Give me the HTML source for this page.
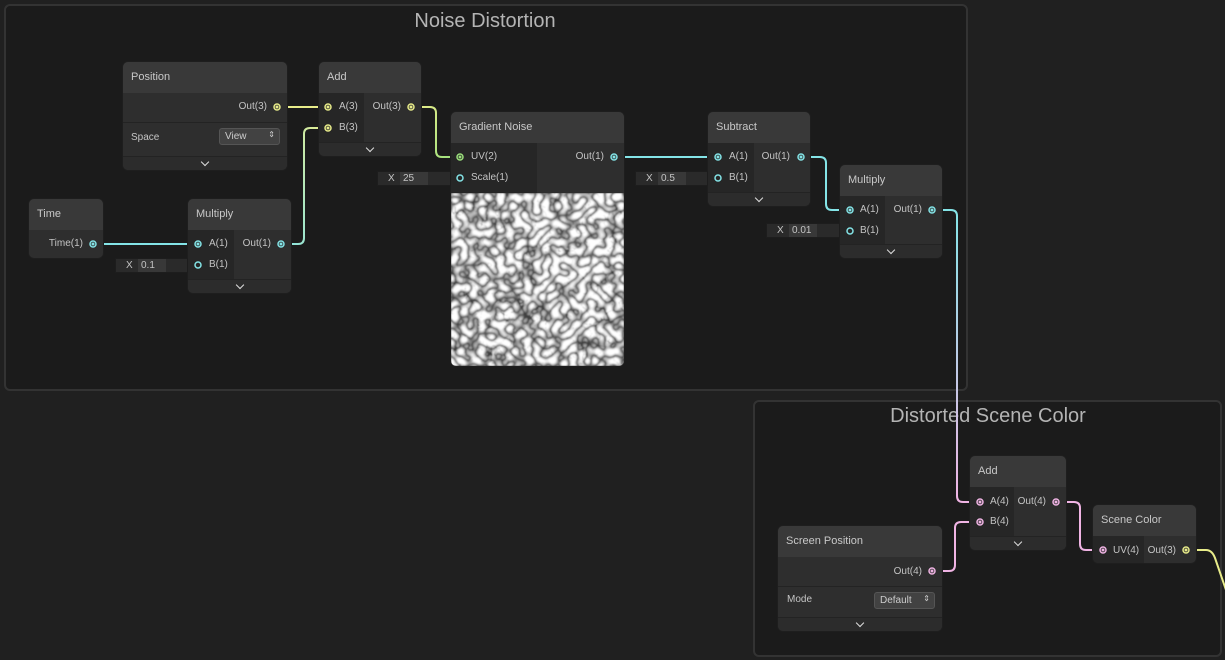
<!DOCTYPE html>
<html><head><meta charset="utf-8"><style>
*{box-sizing:border-box;margin:0;padding:0}
body{width:1225px;height:660px;background:#202020;position:relative;overflow:hidden;font-family:"Liberation Sans",sans-serif;color:#c4c4c4;font-size:10px}
.grp{position:absolute;background:#1b1b1b;border:2px solid #333;border-radius:6px}
.gt{position:absolute;font-size:20px;color:#b4b4b4;white-space:nowrap;transform:translateX(-50%)}
.node{position:absolute;background:#2e2e2e;border-radius:5px;overflow:hidden;box-shadow:0 0 0 1px #1e1e1e}
.hd{position:absolute;left:0;right:0;top:0;height:31px;background:#393939;padding:9px 0 0 8px;font-size:11px;color:#c8c8c8}
.ic{position:absolute;left:0;background:#262626}
.bar{position:absolute;left:0;right:0;bottom:0;height:14px;background:#2c2c2c;border-top:1px solid #232323}
.bar:after{content:"";position:absolute;left:50%;top:2px;width:5px;height:5px;border-right:1.5px solid #ddd;border-bottom:1.5px solid #ddd;transform:translateX(-50%) rotate(45deg)}
.t{position:absolute;font-size:10px;color:#c4c4c4;white-space:nowrap}
.sep{position:absolute;left:0;right:0;height:1px;background:#232323}
.fld{position:absolute;height:15px;background:#2a2a2a;border:1px solid #1d1d1d;font-size:10px}
.fld .x{position:absolute;left:10px;top:1px}
.fld .v{position:absolute;left:22px;top:0;height:13px;width:28px;background:#383838;padding:1px 3px}
.dd{position:absolute;height:17px;background:#424242;border:1px solid #555;border-radius:3px;font-size:10px;padding:2px 5px;color:#ccc}
</style></head><body>
<div class="grp" style="left:4px;top:4px;width:964px;height:387px"></div>
<div class="gt" style="left:485px;top:10px">Noise Distortion</div>
<div class="grp" style="left:753px;top:400px;width:469px;height:257px"></div>
<div class="gt" style="left:988px;top:405px">Distorted Scene Color</div>

<svg style="position:absolute;left:0;top:0" width="1225" height="660">
<defs>
<linearGradient id="yg" x1="0" y1="0" x2="1" y2="1"><stop offset="0" stop-color="#e8ec8a"/><stop offset="1" stop-color="#9be07c"/></linearGradient>
<linearGradient id="cy" x1="0" y1="1" x2="1" y2="0"><stop offset="0" stop-color="#84e4e7"/><stop offset="1" stop-color="#e8ec8a"/></linearGradient>
<linearGradient id="cp" x1="0" y1="0" x2="0" y2="1"><stop offset="0" stop-color="#84e4e7"/><stop offset="1" stop-color="#f0b4e4"/></linearGradient>
<filter id="nz" x="0" y="0" width="100%" height="100%"><feTurbulence type="turbulence" baseFrequency="0.11" numOctaves="1" seed="7"/><feColorMatrix type="matrix" values="3.2 0 0 0 0.05  3.2 0 0 0 0.05  3.2 0 0 0 0.05  0 0 0 0 1"/><feGaussianBlur stdDeviation="0.9"/></filter>
</defs>
<g fill="none" stroke-width="2">
<path d="M277 107H328" stroke="#e8ec8a"/>
<path d="M411 107H430Q436 107 436 113V151Q436 157 442 157H460" stroke="url(#yg)"/>
<path d="M93 244H198" stroke="#84e4e7"/>
<path d="M281 244H298Q304 244 304 238V134Q304 128 310 128H328" stroke="url(#cy)"/>
<path d="M614 157H718" stroke="#84e4e7"/>
<path d="M801 157H820Q826 157 826 163V204Q826 210 832 210H850" stroke="#84e4e7"/>
<path d="M932 210H951Q957 210 957 216V496Q957 502 963 502H980" stroke="url(#cp)"/>
<path d="M932 571H949Q955 571 955 565V528Q955 522 961 522H980" stroke="#f0b4e4"/>
<path d="M1056 502H1074Q1080 502 1080 508V544Q1080 550 1086 550H1103" stroke="#f0b4e4"/>
<path d="M1186 550H1206Q1212 550 1215 558L1226 590" stroke="#e8ec8a"/>
<path d="M175 265H198M438 178H460M697 178H718M828 231H850" stroke="#6cbcc0" stroke-width="1.5"/>
</g>
<g fill="#84e4e7"><circle cx="175" cy="265" r="2"/><circle cx="438" cy="178" r="2"/><circle cx="697" cy="178" r="2"/><circle cx="828" cy="231" r="2"/></g>
</svg>

<div class="node" style="left:123px;top:62px;width:164px;height:108px">
<div class="hd">Position</div>
<div class="t" style="right:20px;top:39px">Out(3)</div>
<div class="sep" style="top:60px"></div>
<div class="t" style="left:8px;top:70px">Space</div>
<div class="dd" style="left:96px;top:66px;width:61px">View<span style="position:absolute;right:4px;top:1px;font-size:8px">⇕</span></div>
<div class="bar"></div>
</div>
<div class="node" style="left:319px;top:62px;width:102px;height:94px">
<div class="hd">Add</div>
<div class="ic" style="top:31px;width:45px;height:49px"></div>
<div class="t" style="left:20px;top:39px">A(3)</div><div class="t" style="left:20px;top:60px">B(3)</div>
<div class="t" style="right:20px;top:39px">Out(3)</div>
<div class="bar"></div>
</div>
<div class="node" style="left:29px;top:199px;width:74px;height:59px">
<div class="hd">Time</div>
<div class="t" style="right:20px;top:39px">Time(1)</div>
</div>
<div class="node" style="left:188px;top:199px;width:103px;height:94px">
<div class="hd">Multiply</div>
<div class="ic" style="top:31px;width:46px;height:49px"></div>
<div class="t" style="left:21px;top:39px">A(1)</div><div class="t" style="left:21px;top:60px">B(1)</div>
<div class="t" style="right:20px;top:39px">Out(1)</div>
<div class="bar"></div>
</div>
<div class="fld" style="left:115px;top:258px;width:73px"><span class="x">X</span><span class="v">0.1</span></div>
<div class="node" style="left:451px;top:112px;width:173px;height:254px">
<div class="hd">Gradient Noise</div>
<div class="ic" style="top:31px;width:86px;height:50px"></div>
<div class="t" style="left:20px;top:39px">UV(2)</div><div class="t" style="left:20px;top:60px">Scale(1)</div>
<div class="t" style="right:20px;top:39px">Out(1)</div>
<svg style="position:absolute;left:0;top:81px" width="173" height="173"><rect width="173" height="173" filter="url(#nz)"/></svg>
</div>
<div class="fld" style="left:377px;top:171px;width:74px"><span class="x">X</span><span class="v">25</span></div>
<div class="node" style="left:708px;top:112px;width:102px;height:94px">
<div class="hd">Subtract</div>
<div class="ic" style="top:31px;width:46px;height:49px"></div>
<div class="t" style="left:21px;top:39px">A(1)</div><div class="t" style="left:21px;top:60px">B(1)</div>
<div class="t" style="right:20px;top:39px">Out(1)</div>
<div class="bar"></div>
</div>
<div class="fld" style="left:635px;top:171px;width:73px"><span class="x">X</span><span class="v">0.5</span></div>
<div class="node" style="left:840px;top:165px;width:102px;height:93px">
<div class="hd">Multiply</div>
<div class="ic" style="top:31px;width:45px;height:49px"></div>
<div class="t" style="left:20px;top:39px">A(1)</div><div class="t" style="left:20px;top:60px">B(1)</div>
<div class="t" style="right:20px;top:39px">Out(1)</div>
<div class="bar"></div>
</div>
<div class="fld" style="left:766px;top:223px;width:74px"><span class="x">X</span><span class="v">0.01</span></div>
<div class="node" style="left:970px;top:456px;width:96px;height:94px">
<div class="hd">Add</div>
<div class="ic" style="top:31px;width:44px;height:50px"></div>
<div class="t" style="left:20px;top:40px">A(4)</div><div class="t" style="left:20px;top:60px">B(4)</div>
<div class="t" style="right:20px;top:40px">Out(4)</div>
<div class="bar"></div>
</div>
<div class="node" style="left:1093px;top:505px;width:103px;height:58px">
<div class="hd">Scene Color</div>
<div class="ic" style="top:31px;width:51px;height:27px"></div>
<div class="t" style="left:20px;top:40px">UV(4)</div>
<div class="t" style="right:20px;top:40px">Out(3)</div>
</div>
<div class="node" style="left:778px;top:526px;width:164px;height:105px">
<div class="hd">Screen Position</div>
<div class="t" style="right:20px;top:40px">Out(4)</div>
<div class="sep" style="top:60px"></div>
<div class="t" style="left:9px;top:68px">Mode</div>
<div class="dd" style="left:96px;top:66px;width:61px">Default<span style="position:absolute;right:4px;top:1px;font-size:8px">⇕</span></div>
<div class="bar"></div>
</div>

<svg style="position:absolute;left:0;top:0" width="1225" height="660">
<g stroke-width="1.5" fill="none">
<g stroke="#e8ec8a"><circle cx="277" cy="107" r="3"/><circle cx="328" cy="107" r="3"/><circle cx="328" cy="128" r="3"/><circle cx="411" cy="107" r="3"/><circle cx="1186" cy="550" r="3"/></g>
<g stroke="#9be07c"><circle cx="460" cy="157" r="3"/></g>
<g stroke="#84e4e7"><circle cx="93" cy="244" r="3"/><circle cx="198" cy="244" r="3"/><circle cx="198" cy="265" r="3"/><circle cx="281" cy="244" r="3"/><circle cx="460" cy="178" r="3"/><circle cx="614" cy="157" r="3"/><circle cx="718" cy="157" r="3"/><circle cx="718" cy="178" r="3"/><circle cx="801" cy="157" r="3"/><circle cx="850" cy="210" r="3"/><circle cx="850" cy="231" r="3"/><circle cx="932" cy="210" r="3"/></g>
<g stroke="#f0b4e4"><circle cx="980" cy="502" r="3"/><circle cx="980" cy="522" r="3"/><circle cx="1056" cy="502" r="3"/><circle cx="1103" cy="550" r="3"/><circle cx="932" cy="571" r="3"/></g>
</g>
<g><g fill="#e8ec8a"><circle cx="277" cy="107" r="1.5"/><circle cx="328" cy="107" r="1.5"/><circle cx="328" cy="128" r="1.5"/><circle cx="411" cy="107" r="1.5"/><circle cx="1186" cy="550" r="1.5"/></g>
<circle cx="460" cy="157" r="1.5" fill="#9be07c"/>
<g fill="#84e4e7"><circle cx="93" cy="244" r="1.5"/><circle cx="198" cy="244" r="1.5"/><circle cx="281" cy="244" r="1.5"/><circle cx="614" cy="157" r="1.5"/><circle cx="718" cy="157" r="1.5"/><circle cx="801" cy="157" r="1.5"/><circle cx="850" cy="210" r="1.5"/><circle cx="932" cy="210" r="1.5"/></g>
<g fill="#f0b4e4"><circle cx="980" cy="502" r="1.5"/><circle cx="980" cy="522" r="1.5"/><circle cx="1056" cy="502" r="1.5"/><circle cx="1103" cy="550" r="1.5"/><circle cx="932" cy="571" r="1.5"/></g></g>
</svg>
</body></html>
